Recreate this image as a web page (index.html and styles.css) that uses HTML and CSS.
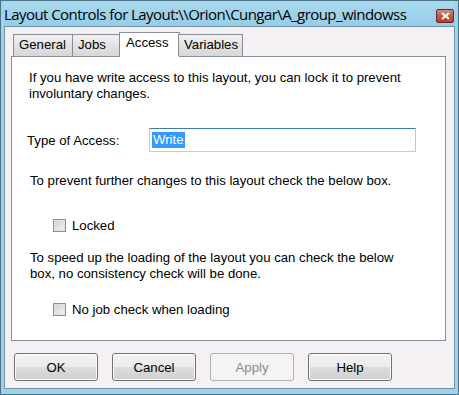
FILE: index.html
```html
<!DOCTYPE html>
<html>
<head>
<meta charset="utf-8">
<link rel="stylesheet" href="styles.css">
</head>
<body>
<div class="window">
  <div class="titlebar">
    <span class="title">Layout Controls for Layout:\\Orion\Cungar\A_group_windowss</span>
    <span class="close"><svg width="9" height="8" viewBox="0 0 9 8"><path d="M1 1 L8 7 M8 1 L1 7" stroke="#fff" stroke-width="2"/></svg></span>
  </div>
  <div class="client">
    <div class="tabs">
      <div class="tab">General</div>
      <div class="tab">Jobs</div>
      <div class="tab active">Access</div>
      <div class="tab">Variables</div>
    </div>
    <div class="panel">
      <p class="para p1">If you have write access to this layout, you can lock it to prevent<br>involuntary changes.</p>
      <div class="field">
        <span class="label">Type of Access:</span>
        <div class="input"><span class="sel">Write</span></div>
      </div>
      <p class="para p2">To prevent further changes to this layout check the below box.</p>
      <label class="check c1"><span class="box"></span>Locked</label>
      <p class="para p3">To speed up the loading of the layout you can check the below<br>box, no consistency check will be done.</p>
      <label class="check c2"><span class="box"></span>No job check when loading</label>
    </div>
    <div class="buttons">
      <div class="btn">OK</div>
      <div class="btn">Cancel</div>
      <div class="btn disabled">Apply</div>
      <div class="btn">Help</div>
    </div>
  </div>
</div>
</body>
</html>
```
FILE: styles.css
```css
* { box-sizing: border-box; }
html, body { margin: 0; padding: 0; }
body { width: 459px; height: 395px; overflow: hidden; font-family: "Liberation Sans", Arial, sans-serif; font-size: 13.2px; color: #000; }
.window {
  width: 459px; height: 395px;
  background: #9fd3ea;
  border: 1px solid #4d7388;
  display: flex; flex-direction: column;
  padding: 0 3px 5px 3px;
}
.titlebar {
  height: 25px; flex: none;
  display: flex; align-items: center; justify-content: space-between;
  background: linear-gradient(#a8d9ee, #97cde6);
}
.title { font-family: "Open Sans", "DejaVu Sans", sans-serif; font-size: 15px; letter-spacing: -0.56px; color: #000; }
.close {
  width: 18px; height: 14px; margin-right: 1px; margin-top: 4px;
  border: 1px solid #6b2b24; border-radius: 2px;
  background: linear-gradient(#d4887a, #c2584a 50%, #b0412f);
  display: flex; align-items: center; justify-content: center;
}
.client {
  flex: 1;
  background: #f4f0f4;
  border: 1px solid #6f93a8;
  display: flex; flex-direction: column;
  padding: 3px 8px 0 6px;
}
.tabs { display: flex; height: 26px; align-items: flex-end; padding-left: 2px; position: relative; z-index: 1; }
.tab {
  height: 22px; padding: 0 5px; line-height: 20px;
  border: 1px solid #898c95; border-bottom: none;
  background: linear-gradient(#f2f2f2, #e2e2e2 50%, #d7d7d7);
  margin-right: -1px;
}
.tab:nth-child(1) { width: 60px; padding-left: 5px; }
.tab:nth-child(2) { width: 48px; }
.tab:nth-child(4) { width: 65px; margin-left: -1px; }
.tab.active {
  width: 61px; background: #fff; margin-bottom: -1px; line-height: 19px; padding-left: 6px;
  height: 25px;
}
.panel {
  height: 285px;
  background: #fff;
  border: 1px solid #898c95;
  display: flex; flex-direction: column;
  padding: 0 0 0 17px;
}
.para { margin: 0; line-height: 16px; }
.p1 { margin-top: 13px; }
.field { display: flex; align-items: center; margin-top: 26px; margin-left: -2px; }
.label { width: 122px; }
.input {
  width: 267px; height: 24px;
  border: 1px solid #b5cde3; border-top-color: #3d7bad; border-bottom-color: #b9d2e8;
  padding: 2px 2px; display: flex; align-items: center;
}
.sel { background: #3399ff; color: #fff; line-height: 16px; padding: 0 1px; }
.p2 { margin-top: 21px; margin-left: 1px; }
.check { display: flex; align-items: center; height: 16px; }
.c1 { margin-top: 28px; margin-left: 24px; }
.c2 { margin-top: 19px; margin-left: 24px; }
.box {
  width: 13px; height: 13px; margin-right: 6px;
  border: 1px solid #8e8f8f;
  background: linear-gradient(135deg, #cbcfd5, #f4f4f4);
  box-shadow: inset 0 0 0 1px #e0e1e3;
}
.p3 { margin-top: 17px; margin-left: 1px; }
.buttons { display: flex; gap: 14px; padding-left: 3px; margin-top: 12px; }
.btn {
  width: 84px; height: 28px;
  border: 1px solid #707070; border-radius: 3px;
  background: linear-gradient(#f2f2f2, #ebebeb 48%, #dddddd 50%, #cfcfcf);
  box-shadow: inset 0 0 0 1px #fcfcfc;
  display: flex; align-items: center; justify-content: center;
}
.btn.disabled { border-color: #adb2b5; background: #f4f4f4; color: #8a8a8a; box-shadow: none; }
```
